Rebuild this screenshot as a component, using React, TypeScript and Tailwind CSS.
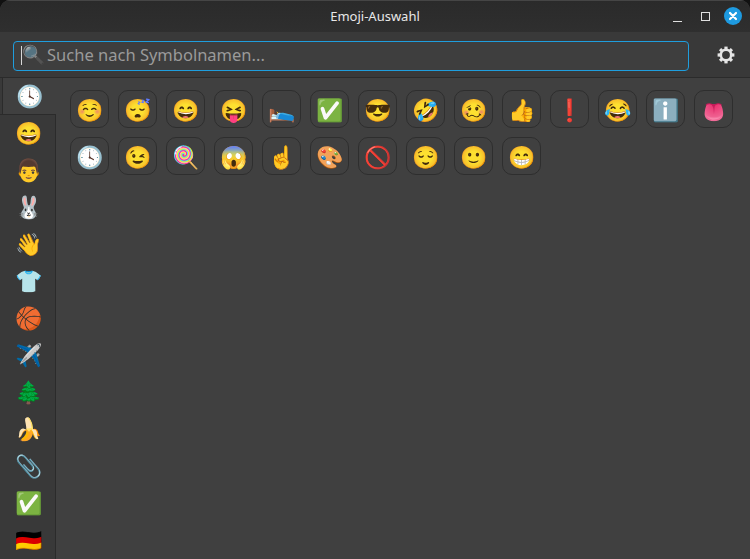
const recent = ['☺️','😴','😄','😝','🛌','✅','😎','🤣','🥴','👍','❗','😂','ℹ️','👅','🕓','😉','🍭','😱','☝️','🎨','🚫','😌','🙂','😁'];
const tabs = ['😄','👨','🐰','👋','👕','🏀','✈️','🌲','🍌','📎','✅','🇩🇪'];
const emojiFont = "font-['Noto_Color_Emoji','Noto_Sans',sans-serif]";

const GearIcon = () => (
  <svg width="18" height="18" viewBox="0 0 18 18" className="ml-[28px] -mt-[2px] text-[#e6e6e6]">
    <circle cx="9" cy="9" r="5.2" fill="none" stroke="currentColor" strokeWidth="2.6" />
    {[0, 45, 90, 135, 180, 225, 270, 315].map((a) => (
      <rect key={a} x="7.4" y="0.6" width="3.2" height="3.6" fill="currentColor" transform={`rotate(${a} 9 9)`} />
    ))}
  </svg>
);

export default function App() {
  return (
    <div className="w-[750px] h-[559px] bg-[#111] overflow-hidden font-['Noto_Sans',sans-serif]">
      <div className="w-full h-full flex flex-col rounded-t-[10px] overflow-hidden bg-[#404040]">
        {/* title bar */}
        <header className="h-8 shrink-0 flex items-center relative bg-gradient-to-b from-[#2a2a2a] to-[#2f2f2f] border-t border-[#454545]">
          <span className="w-full text-center text-[13px] text-[#e8e8e8]">Emoji-Auswahl</span>
          <div className="absolute right-[8px] top-[6px] flex items-center">
            <span className="w-[9px] h-px bg-[#e0e0e0] mt-[4px] mr-[19px] translate-y-[3px]" />
            <span className="w-[9px] h-[9px] border border-[#e0e0e0] mr-[14px]" />
            <span className="w-[18px] h-[18px] rounded-full bg-[#1e9ae0] flex items-center justify-center">
              <svg width="10" height="10" viewBox="0 0 10 10"><path d="M2 2l6 6M8 2l-6 6" stroke="#fff" strokeWidth="2.2" strokeLinecap="round" /></svg>
            </span>
          </div>
        </header>

        {/* search row */}
        <div className="h-[46px] shrink-0 flex items-center pl-[13px] pt-[2px] bg-[#393939] border-b border-[#2b2b2b]">
          <div className="w-[676px] h-[30px] rounded-[4px] border border-[#1f9ede] bg-[#3e3e3e] flex items-center pl-[7px] text-[#9a9a9a] text-[16.5px]">
            <span className="w-px h-[19px] bg-[#d8d8d8]" />
            <span className={`${emojiFont} text-[18.5px] leading-none opacity-60`}>🔍</span>
            <span className="ml-[2px]">Suche nach Symbolnamen...</span>
          </div>
          <GearIcon />
        </div>

        <div className="flex-1 flex min-h-0">
          {/* category tabs */}
          <aside className="w-[56px] shrink-0 flex flex-col bg-[#393939] border-r border-[#2b2b2b] pl-[2px]">
            <div className={`${emojiFont} h-[36px] -mr-px pl-[2px] pt-px bg-[#404040] border-l border-[#2b2b2b] flex items-center justify-center text-[22px] relative`}>🕓</div>
            <div className="border-t border-[#2b2b2b] -ml-[2px] pl-[2px]">
              {tabs.map((t) => (
                <div key={t} className={`${emojiFont} h-[37px] pl-[2px] flex items-center justify-center text-[22px]`}>{t}</div>
              ))}
            </div>
          </aside>

          {/* emoji grid */}
          <main className="flex-1 pt-3 pl-[14px]">
            <div className="grid grid-cols-[repeat(14,39px)] gap-x-[9px] gap-y-[9px]">
              {recent.map((e) => (
                <div key={e} className={`${emojiFont} h-[38px] pt-[2px] pl-px rounded-[10px] border border-[#2e2e2e] flex items-center justify-center text-[22px]`}>{e}</div>
              ))}
            </div>
          </main>
        </div>
      </div>
    </div>
  );
}
